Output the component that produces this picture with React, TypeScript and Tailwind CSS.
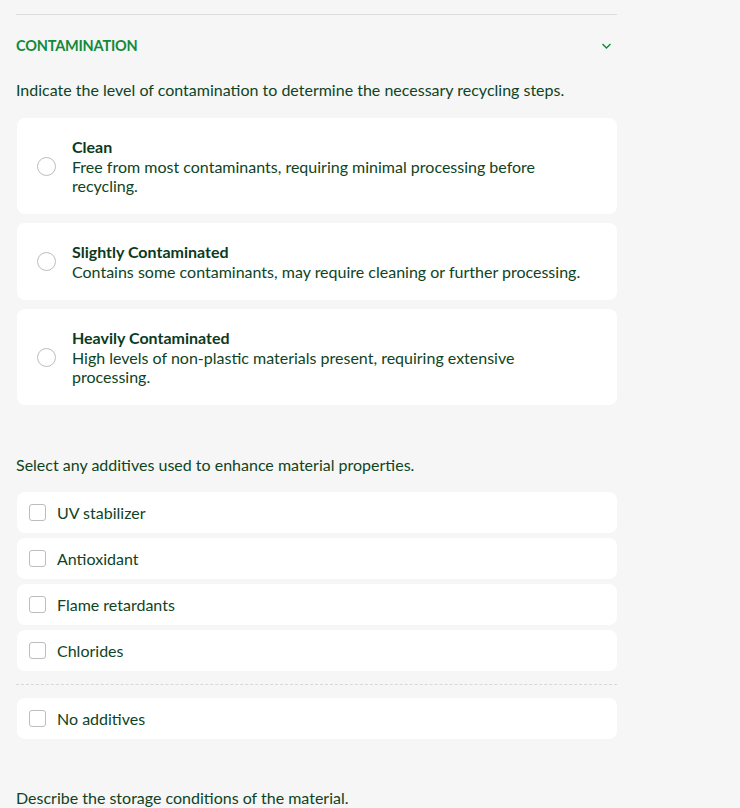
import { useState } from 'react'

const levels = [
  {
    id: 'clean',
    title: 'Clean',
    text: 'Free from most contaminants, requiring minimal processing before recycling.',
  },
  {
    id: 'slight',
    title: 'Slightly Contaminated',
    text: 'Contains some contaminants, may require cleaning or further processing.',
  },
  {
    id: 'heavy',
    title: 'Heavily Contaminated',
    text: 'High levels of non-plastic materials present, requiring extensive processing.',
  },
]

const additives = ['UV stabilizer', 'Antioxidant', 'Flame retardants', 'Chlorides']

function CheckRow({ label, checked, onToggle }: { label: string; checked: boolean; onToggle: () => void }) {
  return (
    <label className="flex h-[41px] cursor-pointer items-center gap-[11px] rounded-lg bg-white px-3">
      <span
        onClick={onToggle}
        className={`h-[17px] w-[17px] shrink-0 rounded-[3px] border-[1.5px] ${
          checked ? 'border-[#118a3c] bg-[#118a3c]' : 'border-[#bdbdbd] bg-white'
        }`}
      />
      <span className="text-[16px] text-[#0e4424]">{label}</span>
    </label>
  )
}

export default function App() {
  const [level, setLevel] = useState<string | null>(null)
  const [picked, setPicked] = useState<string[]>([])

  const toggle = (a: string) =>
    setPicked((p) => (p.includes(a) ? p.filter((x) => x !== a) : [...p, a]))

  return (
    <div
      className="min-h-screen bg-[#f6f6f6] text-[#0e4424]"
      style={{ fontFamily: 'Lato, "Open Sans", sans-serif' }}
    >
      <div className="w-[617px] pl-4">
        <div className="pt-[14px]">
          <div className="border-t border-[#dcdcdc]" />
        </div>

        {/* header */}
        <div className="flex h-[62px] items-center justify-between pr-[5px]">
          <h2 className="text-[14.5px] font-bold uppercase tracking-[-0.2px] text-[#118a3c]">Contamination</h2>
          <svg className="h-[8px] w-[11px]" viewBox="0 0 11 8" fill="none" stroke="#118a3c" strokeWidth={1.4}>
            <path d="M1.5 2l4 4 4-4" />
          </svg>
        </div>

        <p className="mt-[3px] text-[16px] leading-5">
          Indicate the level of contamination to determine the necessary recycling steps.
        </p>

        <div className="mt-[18px] flex flex-col gap-[9px] pl-px">
          {levels.map((l) => (
            <button
              key={l.id}
              onClick={() => setLevel(l.id)}
              className="flex items-center gap-4 rounded-lg bg-white py-[19px] pl-5 pr-8 text-left"
            >
              <span
                className={`h-[19px] w-[19px] shrink-0 rounded-full border-[1.5px] ${
                  level === l.id ? 'border-[5px] border-[#118a3c]' : 'border-[#bdbdbd]'
                }`}
              />
              <span className="flex flex-col text-[16px]">
                <span className="font-bold leading-5 text-[#0b3a1d]">{l.title}</span>
                <span className="leading-[19px]">{l.text}</span>
              </span>
            </button>
          ))}
        </div>

        <p className="mt-[50px] text-[16px] leading-5">Select any additives used to enhance material properties.</p>

        <div className="mt-[17px] flex flex-col gap-[5px] pl-px">
          {additives.map((a) => (
            <CheckRow key={a} label={a} checked={picked.includes(a)} onToggle={() => toggle(a)} />
          ))}
        </div>

        <div className="my-[13px] border-t border-dashed border-[#d8d8d8]" />

        <div className="pl-px">
          <CheckRow label="No additives" checked={picked.includes('none')} onToggle={() => toggle('none')} />
        </div>

        <p className="mt-[49px] text-[16px] leading-5">Describe the storage conditions of the material.</p>
      </div>
    </div>
  )
}
